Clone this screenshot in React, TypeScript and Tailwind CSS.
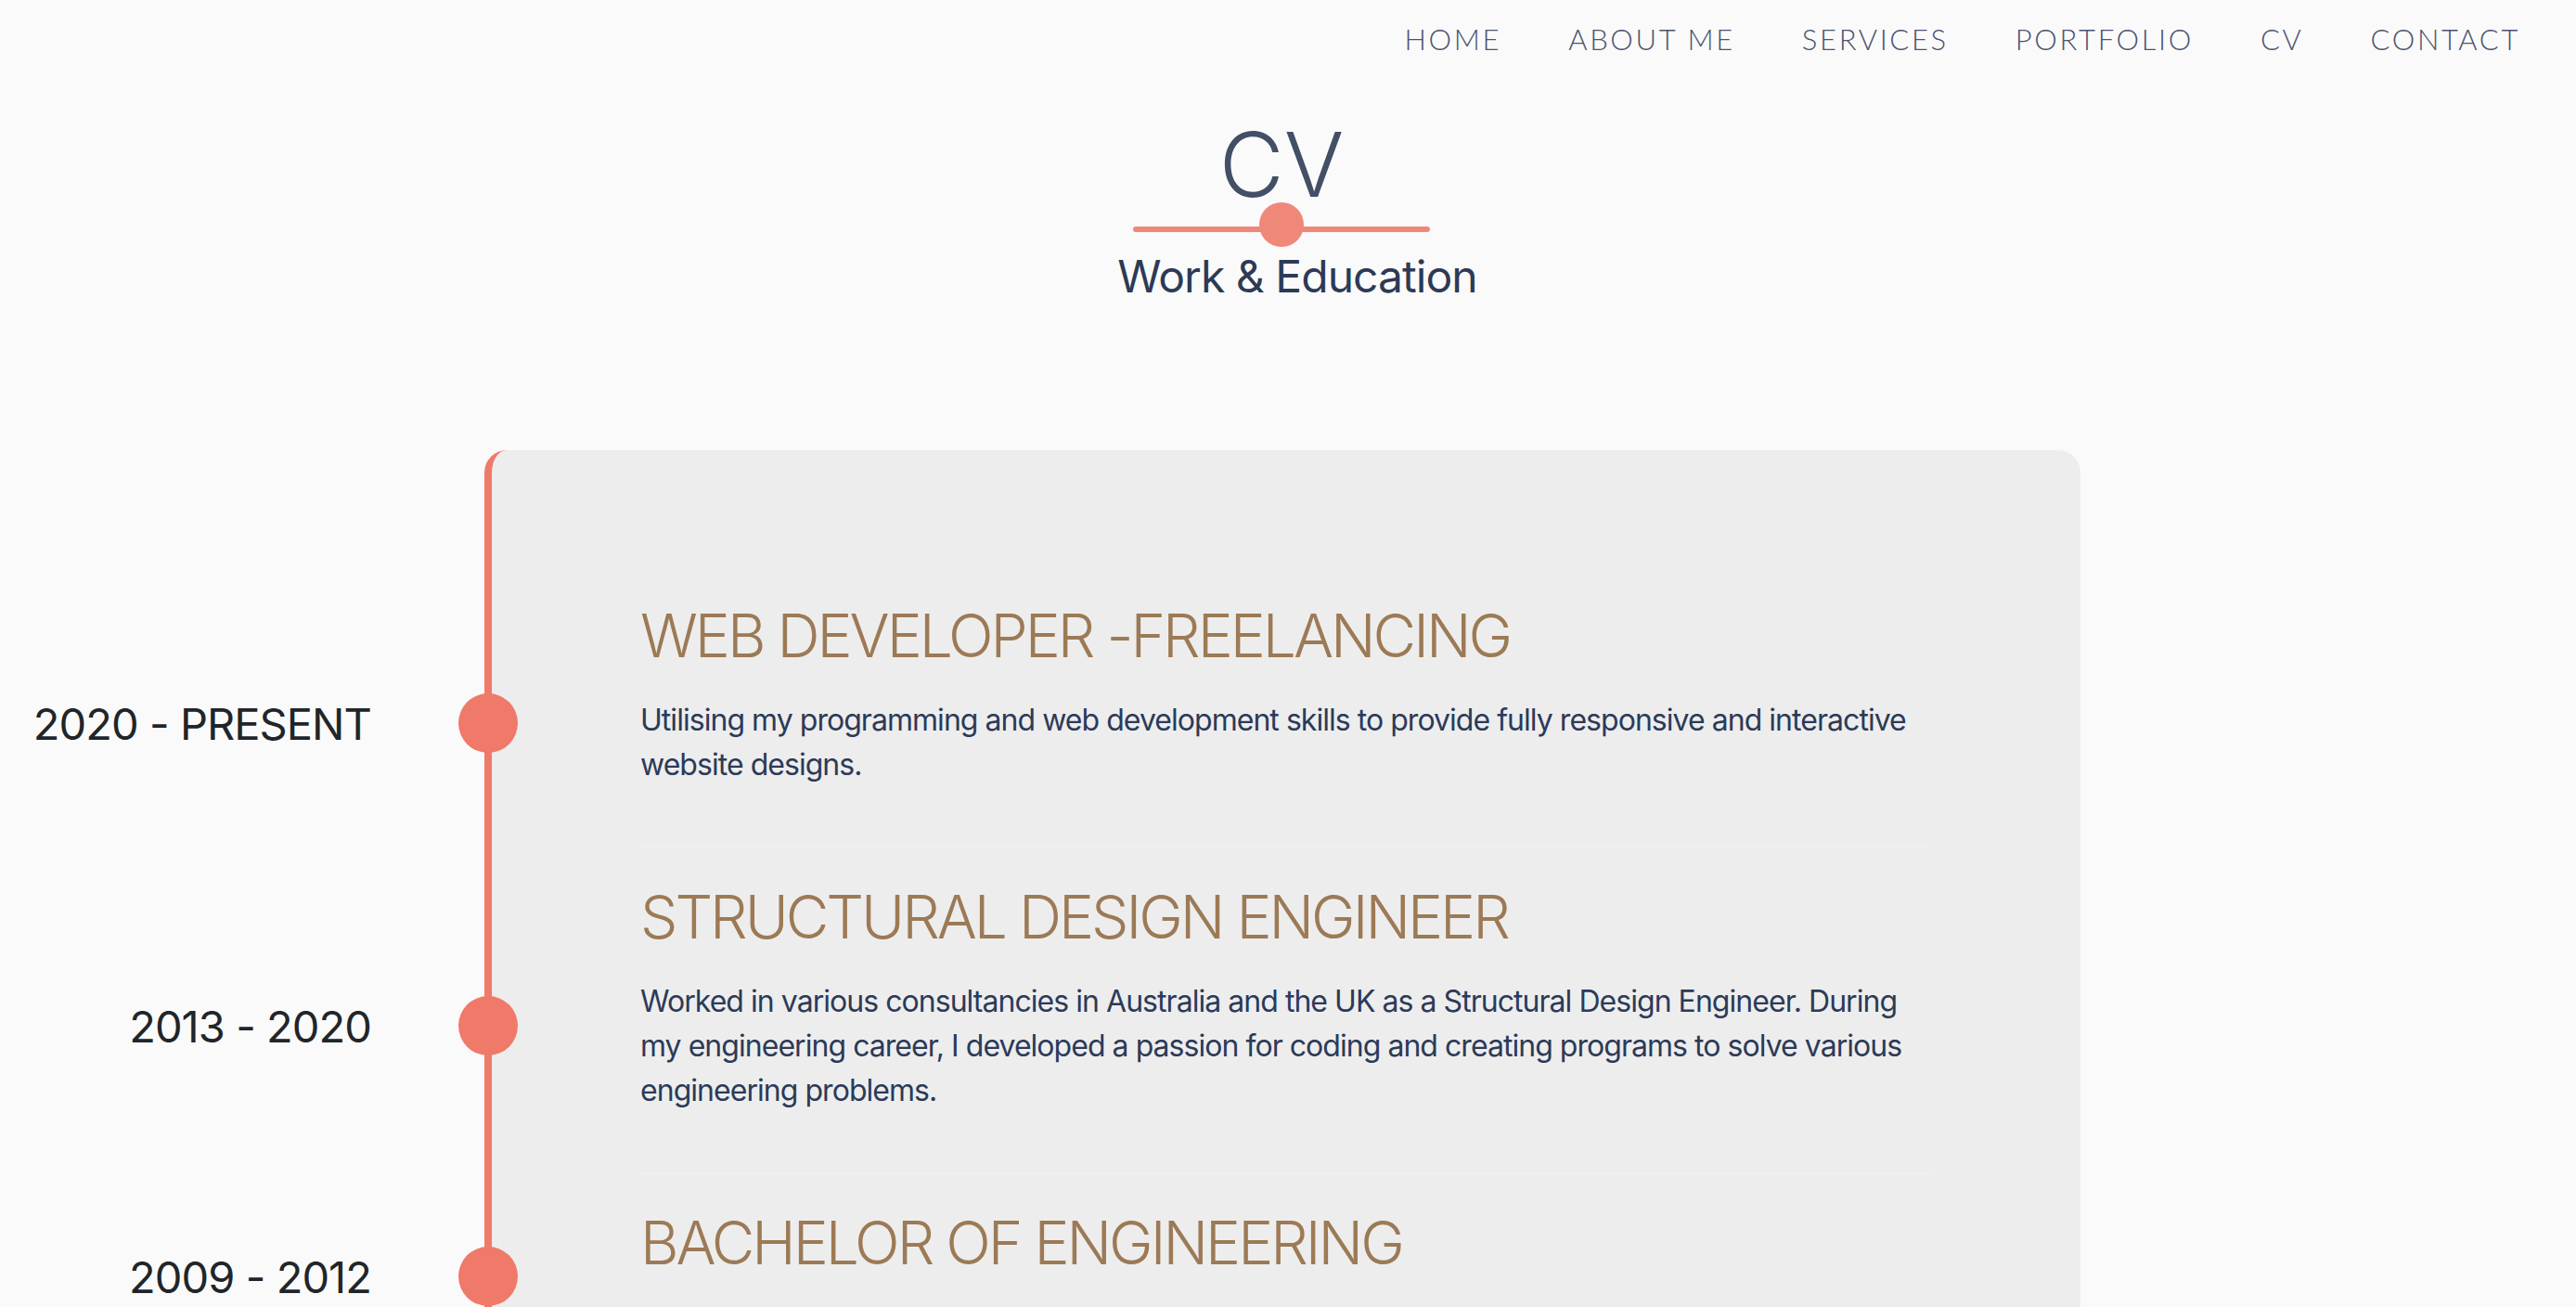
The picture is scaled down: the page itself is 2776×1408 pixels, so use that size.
import React from "react";

const navLinks = ["HOME", "ABOUT ME", "SERVICES", "PORTFOLIO", "CV", "CONTACT"];

const entries = [
  {
    title: "WEB DEVELOPER -FREELANCING",
    text: "Utilising my programming and web development skills to provide fully responsive and interactive website designs.",
  },
  {
    title: "STRUCTURAL DESIGN ENGINEER",
    text: "Worked in various consultancies in Australia and the UK as a Structural Design Engineer. During my engineering career, I developed a passion for coding and creating programs to solve various engineering problems.",
  },
  {
    title: "BACHELOR OF ENGINEERING",
    text: "Studied a Bachelor of Civil Engineering with a major in structural engineering, graduating with honours.",
  },
];

const dates = [
  { label: "2020 - PRESENT", mt: "mt-[262px]" },
  { label: "2013 - 2020", mt: "mt-[262px]" },
  { label: "2009 - 2012", mt: "mt-[206px]" },
];

export default function App() {
  return (
    <div className="min-h-screen w-full bg-[#fafafa] font-['Inter',sans-serif] overflow-hidden">
      {/* nav */}
      <nav className="flex justify-end items-center h-[84px] pr-[60px] gap-[72px]">
        {navLinks.map((l) => (
          <a
            key={l}
            className="text-[31px] font-light font-['Lato',sans-serif] tracking-[0.085em] text-[#4b5470] cursor-pointer"
          >
            {l}
          </a>
        ))}
      </nav>

      {/* title */}
      <header className="flex flex-col items-center pr-[14px]">
        <h1 className="text-[96px] leading-none font-light text-[#434f66] mt-[45px]">CV</h1>
        <div className="relative w-[320px] h-[48px] -mt-[7px]">
          <div className="absolute left-0 right-0 top-[26px] h-[6px] rounded-full bg-[#f0887a]" />
          <div className="absolute left-1/2 top-0 -translate-x-1/2 w-[48px] h-[48px] rounded-full bg-[#f0887a]" />
        </div>
        <h2 className="text-[48px] leading-none tracking-[-0.02em] text-[#2d3a55] mt-[8px] ml-[34px]">
          Work &amp; Education
        </h2>
      </header>

      {/* timeline */}
      <section className="flex mt-[163px]">
        <div className="w-[522px] shrink-0 relative z-10 flex flex-col">
          {dates.map((d) => (
            <div key={d.label} className={`${d.mt} flex items-center justify-end h-[64px] -mr-[36px]`}>
              <span className="text-[47px] leading-none text-[#212529] tracking-[-0.02em]">{d.label}</span>
              <span className="ml-[94px] w-[64px] h-[64px] rounded-full bg-[#ef7a6a]" />
            </div>
          ))}
        </div>
        <div className="w-[1720px] shrink-0 bg-[#ededed] border-l-8 border-[#ef7a6a] rounded-t-[24px] px-[160px] pt-[161px] pb-[120px]">
          {entries.map((e, i) => (
            <div key={e.title} className={i > 0 ? "border-t border-[#f2f2f2] pt-[35px]" : ""}>
              <h3 className="text-[64px] leading-[77px] font-light text-[#9c7a56] tracking-[-0.047em]">{e.title}</h3>
              <p className="mt-[29px] text-[32px] leading-[48px] text-[#2c3a58] tracking-[-0.03em] pb-[65px]">
                {e.text}
              </p>
            </div>
          ))}
        </div>
      </section>
    </div>
  );
}
